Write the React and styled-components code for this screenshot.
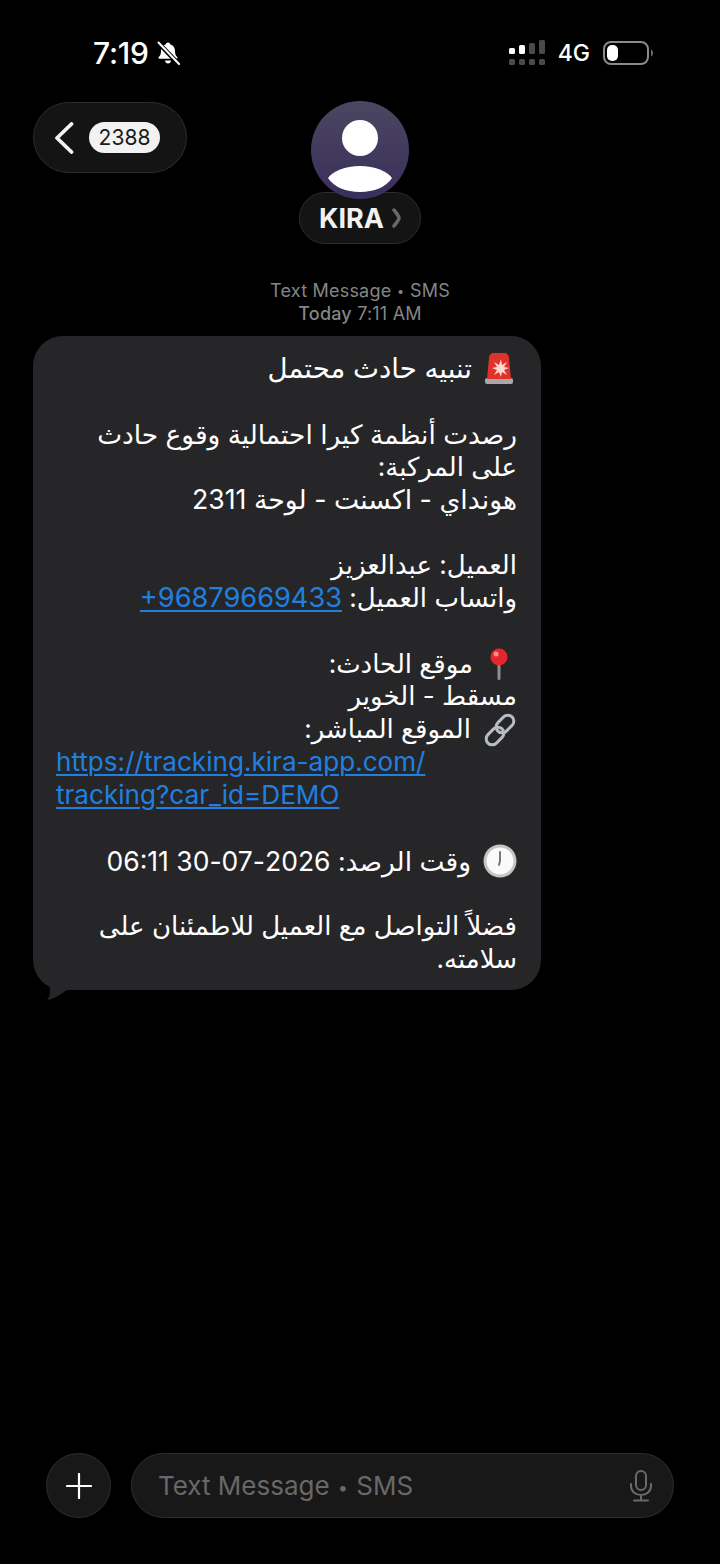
import React from 'react'
import styled, { createGlobalStyle } from 'styled-components'

const GlobalStyle = createGlobalStyle`
  html, body {
    margin: 0;
    padding: 0;
    background: #000;
  }
`

const Screen = styled.div`
  width: 720px;
  height: 1564px;
  background: #000;
  display: flex;
  flex-direction: column;
  overflow: hidden;
  font-family: Inter, "DejaVu Sans", sans-serif;
`

const StatusBar = styled.div`
  height: 101px;
  flex: none;
  box-sizing: border-box;
  padding: 36px 67px 0 93px;
  display: flex;
  align-items: flex-start;
  justify-content: space-between;
  color: #fff;
`

const TimeGroup = styled.div`
  display: flex;
  align-items: center;
  gap: 7px;
  height: 34px;
`

const Clock = styled.span`
  font-size: 30px;
  font-weight: 500;
  letter-spacing: -0.2px;
`

const StatusRight = styled.div`
  display: flex;
  align-items: center;
  gap: 13px;
  height: 34px;
`

const NetworkLabel = styled.span`
  font-size: 23px;
  font-weight: 500;
`

const Header = styled.div`
  display: grid;
  grid-template-columns: 1fr auto 1fr;
  padding: 0 33px;
  align-items: start;
  flex: none;
`

const BackPill = styled.div`
  justify-self: start;
  box-sizing: border-box;
  width: 154px;
  height: 71px;
  margin-top: 1px;
  border-radius: 36px;
  background: #141414;
  border: 1px solid #2c2c2c;
  display: flex;
  align-items: center;
  padding-left: 20px;
  gap: 15px;
`

const CountBadge = styled.span`
  width: 71px;
  height: 31px;
  border-radius: 16px;
  background: #f2f2f2;
  color: #1a1a1a;
  font-size: 21px;
  display: flex;
  align-items: center;
  justify-content: center;
`

const Contact = styled.div`
  display: flex;
  flex-direction: column;
  align-items: center;
`

const Avatar = styled.div`
  position: relative;
  z-index: 1;
  width: 98px;
  height: 98px;
  border-radius: 50%;
  background: linear-gradient(180deg, #4b4660 0%, #3a2f5c 100%);
  overflow: hidden;
`

const NamePill = styled.div`
  box-sizing: border-box;
  width: 122px;
  height: 52px;
  margin-top: -7px;
  border-radius: 26px;
  background: #141414;
  border: 1px solid #2c2c2c;
  color: #f2f2f2;
  font-size: 27px;
  font-weight: 700;
  display: flex;
  align-items: center;
  justify-content: center;
  gap: 8px;
`

const Meta = styled.div`
  flex: none;
  margin-top: 35px;
  text-align: center;
  color: #858585;
  font-size: 18px;
  line-height: 23px;
  letter-spacing: 0.2px;
`

const MetaStrong = styled.span`
  font-weight: 500;
`

const Dot = styled.span`
  font-size: 0.7em;
  line-height: 0;
  margin: 0 0.45em;
  vertical-align: 0.08em;
`

const Thread = styled.div`
  flex: 1;
  padding: 11px 33px 0;
`

const Bubble = styled.div`
  position: relative;
  box-sizing: border-box;
  width: 508px;
  height: 654px;
  padding: 16px 24px 0 23px;
  border-radius: 30px;
  background: #262628;
  color: #fff;
  direction: rtl;
  font-size: 26px;
  line-height: 32.85px;
`

const Line = styled.div`
  height: 32.85px;
  white-space: nowrap;
  display: flex;
  align-items: center;
  gap: 12px;
  font-size: ${(p) => p.$size || 26}px;
  direction: ${(p) => (p.$ltr ? 'ltr' : 'rtl')};
`

const Link = styled.span`
  direction: ltr;
  unicode-bidi: isolate;
  color: #2080e2;
  text-decoration: underline;
  text-underline-offset: 3px;
  text-decoration-thickness: 2px;
  font-size: ${(p) => p.$size || 26.1}px;
`

const Emoji = styled.svg`
  flex: none;
  margin-right: ${(p) => p.$inset || 0}px;
`

const Tail = styled.svg`
  position: absolute;
  left: 13px;
  bottom: -10px;
`

const Composer = styled.div`
  flex: none;
  display: flex;
  gap: 20px;
  padding: 0 46px 46px;
`

const PlusButton = styled.div`
  box-sizing: border-box;
  width: 65px;
  height: 65px;
  border-radius: 50%;
  background: #181818;
  border: 1px solid #2e2e2e;
  display: flex;
  align-items: center;
  justify-content: center;
`

const InputField = styled.div`
  box-sizing: border-box;
  width: 543px;
  height: 65px;
  border-radius: 33px;
  background: #181818;
  border: 1px solid #2e2e2e;
  display: flex;
  align-items: center;
  justify-content: space-between;
  padding: 0 20px 0 26px;
  color: #686868;
  font-size: 26px;
`

const BellSlash = () => (
  <svg width="24" height="24" viewBox="0 0 24 24">
    <path d="M12 1.500c1.200 0 2 .8 2.100 1.800 3.200.9 4.900 3.400 4.900 6.700 0 2.600.5 4.400 2.300 6.200.5.600.2 1.500-.7 1.500H3.400c-.9 0-1.200-.9-.7-1.500C4.500 14.400 5 12.600 5 10c0-3.300 1.700-5.800 4.900-6.700.1-1 .9-1.800 2.100-1.800z" fill="#fff" />
    <path d="M9 19.500h6c-.2 1.700-1.400 3-3 3s-2.800-1.300-3-3z" fill="#fff" />
    <path d="M2 1.500 22.500 23" stroke="#000" strokeWidth="4.500" />
    <path d="M2.500 1.500 23 23" stroke="#fff" strokeWidth="2" strokeLinecap="round" />
  </svg>
)

const SignalBars = () => (
  <svg width="36" height="26" viewBox="0 0 36 26">
    <rect x="0" y="8" width="6" height="6" rx="1.500" fill="#fff" />
    <rect x="10" y="5" width="6" height="9" rx="1.500" fill="#fff" />
    <rect x="20" y="3" width="6" height="11" rx="1.500" fill="#4a4a4a" />
    <rect x="30" y="0" width="6" height="14" rx="1.500" fill="#4a4a4a" />
    <rect x="0" y="19" width="6" height="6" rx="1.500" fill="#4a4a4a" />
    <rect x="10" y="19" width="6" height="6" rx="1.500" fill="#4a4a4a" />
    <rect x="20" y="19" width="6" height="6" rx="1.500" fill="#4a4a4a" />
    <rect x="30" y="19" width="6" height="6" rx="1.500" fill="#4a4a4a" />
  </svg>
)

const Battery = () => (
  <svg width="50" height="24" viewBox="0 0 50 24">
    <rect x="1" y="1" width="44" height="22" rx="7" fill="none" stroke="#8a8a8a" strokeWidth="2" />
    <rect x="4" y="4" width="11" height="16" rx="5" fill="#fff" />
    <path d="M48 8.500c1.300.4 2 1.800 2 3.500s-.7 3.100-2 3.500z" fill="#6a6a6a" />
  </svg>
)

const BackChevron = () => (
  <svg width="20" height="32" viewBox="0 0 20 32">
    <path d="M17.500 2 3 16l14.500 14" fill="none" stroke="#f2f2f2" strokeWidth="3.800" strokeLinecap="round" strokeLinejoin="round" />
  </svg>
)

const PersonIcon = () => (
  <svg width="98" height="98" viewBox="0 0 98 98">
    <circle cx="49" cy="37" r="18" fill="#fff" />
    <path d="M17 77c5-7 17-12 32-12s27 5 32 12c-6 9-18 14-32 14s-26-5-32-14z" fill="#fff" />
  </svg>
)

const NameChevron = () => (
  <svg width="9" height="20" viewBox="0 0 9 20">
    <path d="M2 2c3 4 5 6 5 8s-2 4-5 8" fill="none" stroke="#6a6a6a" strokeWidth="3.500" strokeLinecap="round" />
  </svg>
)

const SirenEmoji = () => (
  <Emoji $inset={3} width="30" height="32" viewBox="0 0 30 32">
    <rect x="1" y="26" width="28" height="6" rx="2" fill="#a8a8a8" />
    <path d="M5 6c0-3 2-5 5-5h10c3 0 5 2 5 5l2 21H3z" fill="#e0312b" />
    <path d="M8 16l5-1-3-5 5 3 2-6 1 6 5-3-3 5 5 1-5 2 3 5-5-3-1 5-2-5-5 3 3-5z" fill="#ffd9d4" />
  </Emoji>
)

const PinEmoji = () => (
  <Emoji $inset={4} width="28" height="32" viewBox="0 0 28 32">
    <rect x="12.500" y="14" width="3" height="18" rx="1.500" fill="#8e8e8e" />
    <circle cx="14" cy="9" r="8.500" fill="#e5262b" />
    <circle cx="11" cy="6" r="2.500" fill="#ff8f8f" />
  </Emoji>
)

const LinkEmoji = () => (
  <Emoji width="34" height="34" viewBox="0 0 34 34">
    <g fill="none" stroke="#b4bcc4" strokeWidth="3">
      <rect x="2" y="17" width="20" height="12" rx="6" transform="rotate(-45 12 23)" />
      <rect x="12" y="5" width="20" height="12" rx="6" transform="rotate(-45 22 11)" />
    </g>
  </Emoji>
)

const ClockEmoji = () => (
  <Emoji width="34" height="34" viewBox="0 0 34 34">
    <circle cx="17" cy="17" r="16.500" fill="#c9c4c0" />
    <circle cx="17" cy="17" r="13.500" fill="#fafafa" />
    <path d="M17 8v9l-1 4" fill="none" stroke="#6a6a6a" strokeWidth="1.800" strokeLinecap="round" />
  </Emoji>
)

const PlusIcon = () => (
  <svg width="26" height="26" viewBox="0 0 26 26">
    <path d="M13 1v24M1 13h24" stroke="#fff" strokeWidth="2.200" strokeLinecap="round" />
  </svg>
)

const MicIcon = () => (
  <svg width="24" height="32" viewBox="0 0 24 32">
    <rect x="7" y="1" width="10" height="19" rx="5" fill="none" stroke="#6a6a6a" strokeWidth="2" />
    <path d="M2 14v2c0 5.500 4.500 9 10 9s10-3.500 10-9v-2M12 25v5M5 30.500h14" fill="none" stroke="#6a6a6a" strokeWidth="2" strokeLinecap="round" />
  </svg>
)

const App = () => {
  return (
    <Screen>
      <GlobalStyle />
      <StatusBar>
        <TimeGroup>
          <Clock>7:19</Clock>
          <BellSlash />
        </TimeGroup>
        <StatusRight>
          <SignalBars />
          <NetworkLabel>4G</NetworkLabel>
          <Battery />
        </StatusRight>
      </StatusBar>
      <Header>
        <BackPill>
          <BackChevron />
          <CountBadge>2388</CountBadge>
        </BackPill>
        <Contact>
          <Avatar>
            <PersonIcon />
          </Avatar>
          <NamePill>
            KIRA
            <NameChevron />
          </NamePill>
        </Contact>
      </Header>
      <Meta>
        Text Message<Dot>•</Dot>SMS
        <br />
        <MetaStrong>Today</MetaStrong> 7:11 AM
      </Meta>
      <Thread>
        <Bubble>
          <Line $size={27.6}><SirenEmoji />تنبيه حادث محتمل</Line>
          <Line />
          <Line $size={26.4}>رصدت أنظمة كيرا احتمالية وقوع حادث</Line>
          <Line>على المركبة:</Line>
          <Line $size={26.7}>هونداي - اكسنت - لوحة 2311</Line>
          <Line />
          <Line>العميل: عبدالعزيز</Line>
          <Line><span>واتساب العميل: <Link $size={27.2}>+96879669433</Link></span></Line>
          <Line />
          <Line><PinEmoji />موقع الحادث:</Line>
          <Line>مسقط - الخوير</Line>
          <Line><LinkEmoji />الموقع المباشر:</Line>
          <Line $ltr><Link>https://tracking.kira-app.com/</Link></Line>
          <Line $ltr><Link>tracking?car_id=DEMO</Link></Line>
          <Line />
          <Line $size={26.5}><ClockEmoji /><span>وقت الرصد: 2026-07-30 06:11</span></Line>
          <Line />
          <Line>فضلاً التواصل مع العميل للاطمئنان على</Line>
          <Line>سلامته.</Line>
          <Tail width="26" height="16" viewBox="0 0 26 16">
            <path d="M3 0h23l-5 6C16 9 9 15 1 16c3-3 4-8 2-16z" fill="#262628" />
          </Tail>
        </Bubble>
      </Thread>
      <Composer>
        <PlusButton>
          <PlusIcon />
        </PlusButton>
        <InputField>
          <span>Text Message<Dot>•</Dot>SMS</span>
          <MicIcon />
        </InputField>
      </Composer>
    </Screen>
  )
}

export default App
